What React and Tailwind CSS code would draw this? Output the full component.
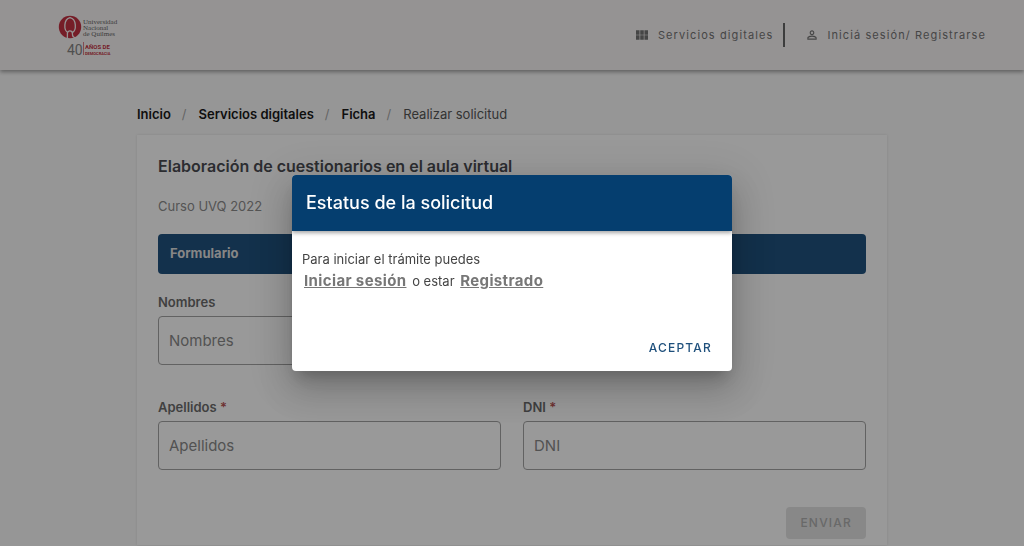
// App.jsx - Request form with the sign-in notice dialog
import { useState } from 'react'
import { MdPersonOutline, MdViewModule } from 'react-icons/md'

const crumbs = [
  { label: 'Inicio', href: '#inicio' },
  { label: 'Servicios digitales', href: '#servicios' },
  { label: 'Ficha', href: '#ficha' },
]

function Logo() {
  return (
    <svg className="w-16 h-11" viewBox="0 0 64 44" role="img" aria-label="Universidad Nacional de Quilmes">
      <circle cx="14" cy="13" r="11.2" fill="#bd1a2d" />
      <path d="M12 18.6C7.6 16.5 7.4 5.2 14 3.6c6.8 1.4 6.6 13 2.2 15" fill="none" stroke="#f8f4f4" strokeWidth="1.3" />
      <path d="M11.4 24.2v-4.6c0-3.6 5-3.4 5 0 0 2.4.6 4 2.8 4" fill="none" stroke="#f8f4f4" strokeWidth="1.3" />
      <g fill="#555" fontFamily="Liberation Serif, serif" fontSize="7">
        <text x="27" y="10">Universidad</text>
        <text x="27" y="16">Nacional</text>
        <text x="27" y="22">de Quilmes</text>
      </g>
      <text x="11" y="41" fill="#777" fontFamily="Roboto, sans-serif" fontSize="14">40</text>
      <path d="M27.5 28v13" stroke="#bd1a2d" strokeWidth="0.6" />
      <g fill="#bd1a2d" fontFamily="Roboto, sans-serif" fontWeight="700">
        <text x="29" y="35" fontSize="6">AÑOS DE</text>
        <text x="29" y="41" fontSize="4">DEMOCRACIA</text>
      </g>
    </svg>
  )
}

function Field({ id, label, required }) {
  return (
    <div className="flex flex-col">
      <label htmlFor={id} className="text-[13px] leading-5 font-semibold text-[#5c5c5c] mb-1">
        {label}
        {required && <span className="text-[#b04040]"> *</span>}
      </label>
      <input id={id} type="text" placeholder={label} required={required}
        className="w-full h-[49px] px-2.5 rounded border border-[#999] bg-transparent text-[15px] text-zinc-800 placeholder:text-[#7c7c7c] outline-none focus:border-[#053e6f]" />
    </div>
  )
}

export default function App() {
  const [open, setOpen] = useState(true)

  return (
    <div className="min-h-screen bg-[#fafafa] font-['Inter','Open_Sans',sans-serif]">
      {/* Top bar */}
      <header className="relative h-[70px] pl-14 pr-[38px] flex items-start justify-between bg-[#f8f4f4] shadow-[0_2px_4px_rgba(0,0,0,0.4)]">
        <a href="#inicio" className="mt-3.5">
          <Logo />
        </a>
        <nav className="h-full flex items-center text-[11px] tracking-widest text-[#666]">
          <a href="#servicios" className="flex items-center gap-2">
            <MdViewModule className="w-4 h-4" />
            Servicios digitales
          </a>
          <span className="w-0.5 h-6 ml-2.5 mr-5 bg-[#555]" />
          <a href="#sesion" className="flex items-center gap-2">
            <MdPersonOutline className="w-3.5 h-3.5" />
            Iniciá sesión/ Registrarse
          </a>
        </nav>
      </header>

      <main className="w-full max-w-[750px] mx-auto pt-[34px]">
        {/* Breadcrumbs */}
        <nav aria-label="Ruta" className="flex items-center gap-3 mb-[11px] text-[13px] leading-5">
          {crumbs.map((crumb) => (
            <span key={crumb.href} className="flex items-center gap-[11px]">
              <a href={crumb.href} className="font-semibold text-black">{crumb.label}</a>
              <span className="text-[#9e9e9e]">/</span>
            </span>
          ))}
          <span className="text-[#444]">Realizar solicitud</span>
        </nav>

        {/* Form card */}
        <section className="bg-white shadow-[0_0_3px_rgba(0,0,0,0.12)] px-[21px] pt-[21px] pb-1.5">
          <h1 className="text-base leading-5 font-semibold text-[#37393f]">Elaboración de cuestionarios en el aula virtual</h1>
          <p className="mt-5 text-[13px] leading-5 text-[#808080]">Curso UVQ 2022</p>
          <h2 className="mt-[18px] h-10 px-3 flex items-center rounded bg-[#094071] text-[13px] font-bold text-[#ddd]">Formulario</h2>

          <form className="mt-[18px]" onSubmit={(e) => e.preventDefault()}>
            <div className="grid grid-cols-2 gap-x-[22px] gap-y-8">
              <Field id="nombres" label="Nombres" />
              <div />
              <Field id="apellidos" label="Apellidos" required />
              <Field id="dni" label="DNI" required />
            </div>
            <div className="mt-[37px] flex justify-end">
              <button type="submit" disabled className="h-8 px-3.5 rounded bg-[#e0e0e0] text-xs font-medium tracking-widest text-[#a6a6a6]">
                ENVIAR
              </button>
            </div>
          </form>
        </section>
      </main>

      {/* Dialog */}
      {open && (
        <div className="fixed inset-0 flex items-center justify-center bg-[#212121]/46">
          <div role="dialog" aria-modal="true" aria-labelledby="dialog-title"
            className="w-[440px] max-w-full rounded bg-white overflow-hidden shadow-[0_10px_14px_-6px_rgba(0,0,0,0.2),0_20px_32px_3px_rgba(0,0,0,0.14),0_8px_40px_7px_rgba(0,0,0,0.12)]">
            <h2 id="dialog-title" className="relative h-14 px-3.5 flex items-center bg-[#053e6f] text-lg font-medium text-white shadow-[0_2px_4px_rgba(0,0,0,0.35)]">
              Estatus de la solicitud
            </h2>
            <div className="px-2.5 pt-[18px] text-[13px] text-[#444]">
              <p className="leading-5">Para iniciar el trámite puedes</p>
              <p className="leading-6">
                <a href="#sesion" className="mx-0.5 text-[15px] font-bold tracking-wide underline text-[#777]">Iniciar sesión</a>
                {' '}o estar{' '}
                <a href="#registro" className="mx-0.5 text-[15px] font-bold tracking-wide underline text-[#777]">Registrado</a>
              </p>
            </div>
            <div className="mt-[37px] px-2 pb-[5px] flex justify-end">
              <button onClick={() => setOpen(false)} className="h-9 px-3 text-xs font-medium tracking-widest text-[#1f507c]">
                ACEPTAR
              </button>
            </div>
          </div>
        </div>
      )}
    </div>
  )
}
